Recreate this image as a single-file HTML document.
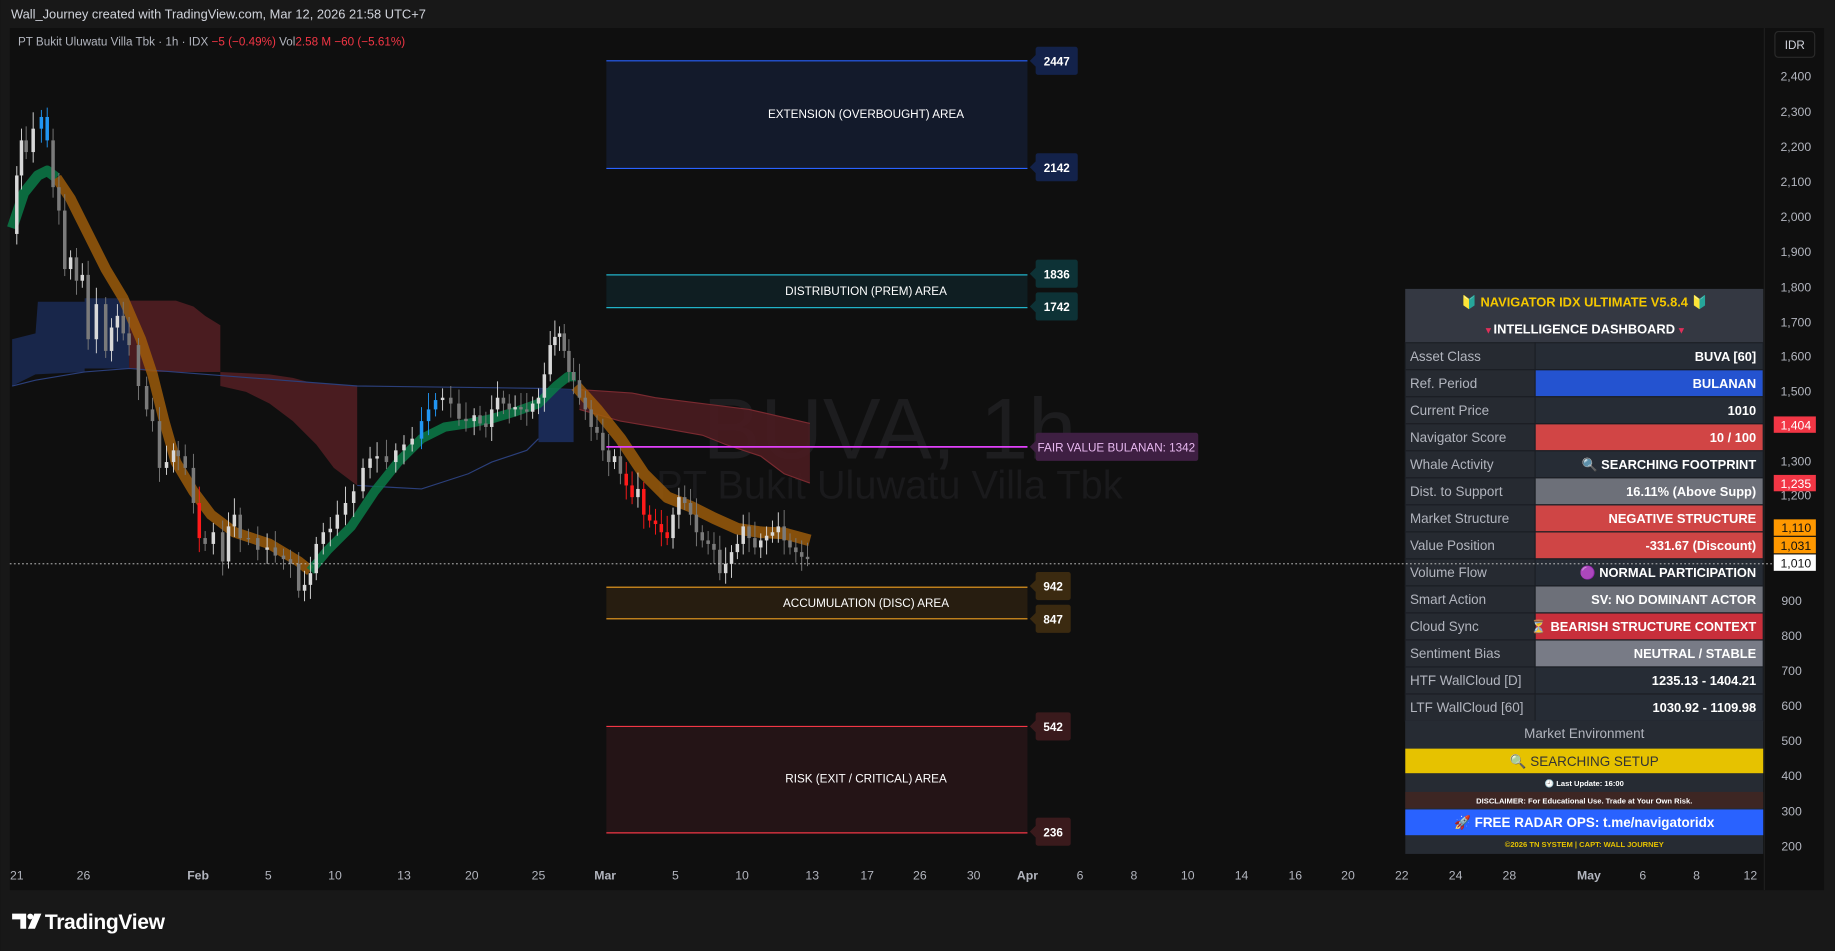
<!DOCTYPE html>
<html><head><meta charset="utf-8"><style>
html,body{margin:0;padding:0;background:#161616;width:1835px;height:951px;overflow:hidden}
svg{display:block}
text{font-family:"Liberation Sans",sans-serif}
</style></head><body>
<svg id="s" width="1835" height="951" viewBox="0 0 1568 813" xmlns="http://www.w3.org/2000/svg">
<rect width="1568" height="813" fill="#181818"/>
<text x="9" y="16" font-size="11" fill="#d1d4dc">Wall_Journey created with TradingView.com, Mar 12, 2026 21:58 UTC+7</text>
<rect x="8" y="24" width="1551" height="737" fill="#0f0f0f"/>
<line x1="1508" y1="24" x2="1508" y2="761" stroke="#1e1e1e"/>
<text x="760" y="392" font-size="74" fill="#1d1d1f" text-anchor="middle">BUVA, 1h</text>
<text x="760" y="426" font-size="34" fill="#1a1a1c" text-anchor="middle">PT Bukit Uluwatu Villa Tbk</text>
<rect x="518" y="52" width="360" height="92" fill="#131a2b"/>
<line x1="518" y1="52" x2="878" y2="52" stroke="#2962ff"/><line x1="518" y1="144" x2="878" y2="144" stroke="#2962ff"/>
<text x="740" y="101" font-size="10" fill="#fff" text-anchor="middle">EXTENSION (OVERBOUGHT) AREA</text>
<rect x="518" y="235" width="360" height="28" fill="#0f1e22"/>
<line x1="518" y1="235" x2="878" y2="235" stroke="#20b2c8"/><line x1="518" y1="263" x2="878" y2="263" stroke="#20b2c8"/>
<text x="740" y="252" font-size="10" fill="#fff" text-anchor="middle">DISTRIBUTION (PREM) AREA</text>
<rect x="518" y="502" width="360" height="27" fill="#271d10"/>
<line x1="518" y1="502" x2="878" y2="502" stroke="#f0a020"/><line x1="518" y1="529" x2="878" y2="529" stroke="#f0a020"/>
<text x="740" y="519" font-size="10" fill="#fff" text-anchor="middle">ACCUMULATION (DISC) AREA</text>
<rect x="518" y="621" width="360" height="91" fill="#241416"/>
<line x1="518" y1="621" x2="878" y2="621" stroke="#f23645"/><line x1="518" y1="712" x2="878" y2="712" stroke="#f23645"/>
<text x="740" y="669" font-size="10" fill="#fff" text-anchor="middle">RISK (EXIT / CRITICAL) AREA</text>
<g>
<polygon points="10,290 30,285 32,258 72,258 72,255 110,255 110,315 72,315 72,318 30,320 10,330" fill="#1a2a55" opacity="0.85"/>
<polygon points="110,257 150,257 165,262 175,270 188,278 188,318 130,318 110,315" fill="#4a1c20"/>
<polygon points="188,318 230,320 250,323 265,327 305,330 305,415 285,400 270,380 250,360 230,345 210,335 188,330" fill="#4a1c20"/>
<polyline points="10,330 30,325 72,318 110,315 305,330 460,332 490,333" fill="none" stroke="#2b3f7a"/>
<polyline points="305,415 360,418 400,405 420,395 450,385 460,375" fill="none" stroke="#2b3f7a"/>
<polygon points="460,332 490,333 490,378 460,378" fill="#1a2a55"/>
<polygon points="495,333 540,336 560,340 600,345 640,350 692,362 692,413 670,405 650,390 620,380 600,372 560,365 530,360 495,350" fill="#4a1c20" opacity="0.9"/>
<polyline points="495,333 540,336 560,340 600,345 640,350 692,362" fill="none" stroke="#7a2a30"/>
<polyline points="495,350 530,360 560,365 600,372 620,380 650,390 670,405 692,413" fill="none" stroke="#7a2a30"/>
</g>
<polyline points="10,195 20,165 32,150 40,146 48,152" fill="none" stroke="#0b7a48" stroke-width="9" stroke-linejoin="round" opacity="0.85"/>
<polyline points="48,152 60,170 75,200 90,230 105,255 120,290 130,320 140,360 150,395 165,420 180,440 200,455 230,465 255,480 265,488" fill="none" stroke="#a35f0a" stroke-width="9" stroke-linejoin="round" opacity="0.8"/>
<polyline points="265,488 280,470 300,450 320,420 340,395 360,375 380,365 400,362 420,358 440,352 460,345 475,330 485,322 492,322" fill="none" stroke="#0b7a48" stroke-width="8" stroke-linejoin="round" opacity="0.85"/>
<polyline points="492,330 510,350 530,375 550,405 570,425 590,433 610,443 630,452 650,455 670,456 692,462" fill="none" stroke="#a35f0a" stroke-width="10" stroke-linejoin="round" opacity="0.8"/>
<g id="candles"></g>
<line x1="518" y1="382" x2="878" y2="382" stroke="#e040fb" stroke-width="1.5"/>
<g font-size="10" font-weight="bold" fill="#fff" text-anchor="middle">
<path d="M880,52 l5,-5 v-5 a2,2 0 0 1 2,-2 h32 a2,2 0 0 1 2,2 v20 a2,2 0 0 1 -2,2 h-32 a2,2 0 0 1 -2,-2 v-5z" fill="#13224a"/><text x="903" y="56">2447</text>
<path d="M880,143 l5,-5 v-5 a2,2 0 0 1 2,-2 h32 a2,2 0 0 1 2,2 v20 a2,2 0 0 1 -2,2 h-32 a2,2 0 0 1 -2,-2 v-5z" fill="#13224a"/><text x="903" y="147">2142</text>
<path d="M880,234 l5,-5 v-5 a2,2 0 0 1 2,-2 h32 a2,2 0 0 1 2,2 v20 a2,2 0 0 1 -2,2 h-32 a2,2 0 0 1 -2,-2 v-5z" fill="#0d3236"/><text x="903" y="238">1836</text>
<path d="M880,262 l5,-5 v-5 a2,2 0 0 1 2,-2 h32 a2,2 0 0 1 2,2 v20 a2,2 0 0 1 -2,2 h-32 a2,2 0 0 1 -2,-2 v-5z" fill="#0d3236"/><text x="903" y="266">1742</text>
<path d="M880,382 l5,-5 v-5 a2,2 0 0 1 2,-2 h135 a2,2 0 0 1 2,2 v20 a2,2 0 0 1 -2,2 h-135 a2,2 0 0 1 -2,-2 v-5z" fill="#3e1f42"/><text x="954" y="386" fill="#e8b8f0" font-weight="normal">FAIR VALUE BULANAN: 1342</text>
<path d="M880,501 l5,-5 v-5 a2,2 0 0 1 2,-2 h26 a2,2 0 0 1 2,2 v20 a2,2 0 0 1 -2,2 h-26 a2,2 0 0 1 -2,-2 v-5z" fill="#3b2a10"/><text x="900" y="505">942</text>
<path d="M880,529 l5,-5 v-5 a2,2 0 0 1 2,-2 h26 a2,2 0 0 1 2,2 v20 a2,2 0 0 1 -2,2 h-26 a2,2 0 0 1 -2,-2 v-5z" fill="#3b2a10"/><text x="900" y="533">847</text>
<path d="M880,621 l5,-5 v-5 a2,2 0 0 1 2,-2 h26 a2,2 0 0 1 2,2 v20 a2,2 0 0 1 -2,2 h-26 a2,2 0 0 1 -2,-2 v-5z" fill="#3a1a1c"/><text x="900" y="625">542</text>
<path d="M880,711 l5,-5 v-5 a2,2 0 0 1 2,-2 h26 a2,2 0 0 1 2,2 v20 a2,2 0 0 1 -2,2 h-26 a2,2 0 0 1 -2,-2 v-5z" fill="#3a1a1c"/><text x="900" y="715">236</text>
</g>
<text x="15" y="39" font-size="10" fill="#b2b5be">PT Bukit Uluwatu Villa Tbk · 1h · IDX <tspan fill="#f23645">−5 (−0.49%)</tspan>  Vol<tspan fill="#f23645">2.58 M  −60 (−5.61%)</tspan></text>
<rect x="1517" y="27" width="34" height="22" rx="3" fill="#0f0f0f" stroke="#2a2a2a"/>
<text x="1534" y="42" font-size="10" fill="#d1d4dc" text-anchor="middle">IDR</text>
<g font-size="10.5" fill="#b2b5be" text-anchor="end">
<text x="1548" y="69">2,400</text><text x="1548" y="99">2,300</text><text x="1548" y="129">2,200</text><text x="1548" y="159">2,100</text><text x="1548" y="189">2,000</text><text x="1548" y="219">1,900</text><text x="1548" y="249">1,800</text><text x="1548" y="279">1,700</text><text x="1548" y="308">1,600</text><text x="1548" y="338">1,500</text><text x="1548" y="368">1,400</text><text x="1548" y="398">1,300</text><text x="1548" y="427">1,200</text><text x="1540" y="517">900</text><text x="1540" y="547">800</text><text x="1540" y="577">700</text><text x="1540" y="607">600</text><text x="1540" y="637">500</text><text x="1540" y="667">400</text><text x="1540" y="697">300</text><text x="1540" y="727">200</text>
</g>
<g font-size="10.5" text-anchor="end">
<rect x="1516" y="356" width="36" height="14" fill="#f23645"/><text x="1548" y="367" fill="#fff">1,404</text>
<rect x="1516" y="406" width="36" height="14" fill="#f23645"/><text x="1548" y="417" fill="#fff">1,235</text>
<rect x="1516" y="444" width="36" height="14" fill="#ff9800"/><text x="1548" y="455" fill="#111">1,110</text>
<rect x="1516" y="459" width="36" height="14" fill="#ff9800"/><text x="1548" y="470" fill="#111">1,031</text>
<rect x="1516" y="474" width="36" height="14" fill="#fff"/><text x="1548" y="485" fill="#111">1,010</text>
</g>
<g font-size="11.5">
<rect x="1201" y="247" width="306" height="483" fill="#262b33"/>
<rect x="1201" y="247" width="306" height="46" fill="#343842"/>
<text x="1354" y="262" fill="#f5c800" font-weight="bold" text-anchor="middle" font-size="11">🔰 NAVIGATOR IDX ULTIMATE V5.8.4 🔰</text>
<text x="1354" y="285" fill="#fff" font-weight="bold" text-anchor="middle" font-size="11">INTELLIGENCE DASHBOARD</text>
<text x="1272" y="285" fill="#e0305a" font-size="8" text-anchor="middle">▼</text>
<text x="1437" y="285" fill="#e0305a" font-size="8" text-anchor="middle">▼</text>
<g id="rows"></g>
<rect x="1201" y="616" width="306" height="24" fill="#262b33"/>
<text x="1354" y="631" fill="#b2b5be" text-anchor="middle">Market Environment</text>
<rect x="1201" y="640" width="306" height="21" fill="#e6c200"/>
<text x="1354" y="655" fill="#333" text-anchor="middle">🔍 SEARCHING SETUP</text>
<text x="1354" y="672" fill="#fff" font-size="6.5" font-weight="bold" text-anchor="middle">🕘 Last Update: 16:00</text>
<rect x="1201" y="677" width="306" height="14" fill="#3d2623"/>
<text x="1354" y="687" fill="#fff" font-size="6.5" font-weight="bold" text-anchor="middle">DISCLAIMER: For Educational Use. Trade at Your Own Risk.</text>
<rect x="1201" y="692" width="306" height="22" fill="#2962ff"/>
<text x="1354" y="707" fill="#fff" font-weight="bold" text-anchor="middle">🚀 FREE RADAR OPS: t.me/navigatoridx</text>
<text x="1354" y="724" fill="#e6c200" font-size="6.5" font-weight="bold" text-anchor="middle">©2026 TN SYSTEM | CAPT: WALL JOURNEY</text>
</g>
<line x1="8" y1="482" x2="1515" y2="482" stroke="#d0d0d0" stroke-dasharray="1.5,2" stroke-width="0.8"/>
<g font-size="10.5" fill="#b2b5be" text-anchor="middle">
<text x="14" y="752">21</text><text x="71" y="752">26</text><text x="169" y="752" font-weight="bold">Feb</text><text x="229" y="752">5</text><text x="286" y="752">10</text><text x="345" y="752">13</text><text x="403" y="752">20</text><text x="460" y="752">25</text><text x="517" y="752" font-weight="bold">Mar</text><text x="577" y="752">5</text><text x="634" y="752">10</text><text x="694" y="752">13</text><text x="741" y="752">17</text><text x="786" y="752">26</text><text x="832" y="752">30</text><text x="878" y="752" font-weight="bold">Apr</text><text x="923" y="752">6</text><text x="969" y="752">8</text><text x="1015" y="752">10</text><text x="1061" y="752">14</text><text x="1107" y="752">16</text><text x="1152" y="752">20</text><text x="1198" y="752">22</text><text x="1244" y="752">24</text><text x="1290" y="752">28</text><text x="1358" y="752" font-weight="bold">May</text><text x="1404" y="752">6</text><text x="1450" y="752">8</text><text x="1496" y="752">12</text>
</g>
<path d="M10,781 h12 v13 h-5 v-8 h-7z" fill="#fff"/>
<circle cx="25.5" cy="783.5" r="2.5" fill="#fff"/>
<path d="M29,781 h6 l-5.5,13 h-6z" fill="#fff"/>
<text x="38" y="794" font-size="18" font-weight="bold" fill="#fff" letter-spacing="-0.3">TradingView</text>
</svg>
<script>
var NS="http://www.w3.org/2000/svg";
var rows=[["Asset Class","BUVA [60]","#262c35"],["Ref. Period","BULANAN","#2453d0"],["Current Price","1010","#262c35"],["Navigator Score","10 / 100","#d14545"],["Whale Activity","🔍 SEARCHING FOOTPRINT","#262c35"],["Dist. to Support","16.11% (Above Supp)","#6d7079"],["Market Structure","NEGATIVE STRUCTURE","#cf4545"],["Value Position","-331.67 (Discount)","#cf4545"],["Volume Flow","🟣 NORMAL PARTICIPATION","#262c35"],["Smart Action","SV: NO DOMINANT ACTOR","#6d7079"],["Cloud Sync","⏳ BEARISH STRUCTURE CONTEXT","#c82f3b"],["Sentiment Bias","NEUTRAL / STABLE","#787b86"],["HTF WallCloud [D]","1235.13 - 1404.21","#262c35"],["LTF WallCloud [60]","1030.92 - 1109.98","#262c35"]];
var g=document.getElementById("rows");
function el(t,a,txt){var e=document.createElementNS(NS,t);for(var k in a)e.setAttribute(k,a[k]);if(txt)e.textContent=txt;return e;}
rows.forEach(function(r,i){var y=293+i*23.1;
g.appendChild(el("rect",{x:1201,y:y,width:111,height:23.1,fill:"#262a31",stroke:"#1b1e24","stroke-width":1}));
g.appendChild(el("rect",{x:1312,y:y,width:195,height:23.1,fill:r[2],stroke:"#1b1e24","stroke-width":1}));
g.appendChild(el("text",{x:1205,y:y+15.5,fill:"#b2b5be","font-size":"11.5"},r[0]));
g.appendChild(el("text",{x:1501,y:y+15.5,fill:"#fff","font-weight":"bold","text-anchor":"end","font-size":"11"},r[1]));
});
var pts=[[10,200],[14,150],[18,120],[22,130],[28,110],[35,100],[40,120],[45,160],[50,180],[55,230],[60,220],[65,240],[70,235],[75,290],[82,260],[90,300],[95,280],[100,270],[105,285],[110,295],[118,330],[125,350],[130,360],[136,400],[142,395],[148,385],[152,390],[158,400],[165,430],[170,460],[175,465],[182,455],[190,480],[195,450],[200,440],[205,460],[212,460],[220,470],[228,468],[235,475],[242,478],[248,482],[255,505],[260,500],[265,490],[270,465],[276,455],[282,452],[288,440],[295,430],[302,420],[310,400],[316,392],[322,390],[330,395],[338,385],[345,380],[352,375],[360,360],[366,350],[372,342],[378,340],[385,345],[392,358],[398,360],[405,355],[410,362],[415,365],[420,350],[425,340],[430,345],[435,350],[440,348],[445,350],[450,352],[455,345],[460,340],[465,320],[470,295],[474,288],[478,285],[482,300],[486,318],[490,325],[495,340],[500,350],[505,365],[510,370],[515,385],[520,395],[525,390],[530,405],[535,415],[540,425],[545,418],[550,440],[555,445],[560,448],[565,455],[570,460],[575,440],[580,425],[585,430],[590,440],[595,455],[600,462],[605,465],[610,470],[615,490],[620,482],[625,472],[630,465],[635,450],[640,460],[645,468],[650,462],[655,458],[660,455],[665,450],[670,462],[675,468],[680,472],[685,476],[690,478]];
var c=document.getElementById("candles");
for(var i=1;i<pts.length;i++){var a=pts[i-1],b=pts[i];var x=b[0];var hi=Math.min(a[1],b[1]),lo=Math.max(a[1],b[1]);
var col=b[1]<a[1]?"#d8d8d8":"#7a7a7a";
if((x>=33&&x<=42)||(x>=360&&x<=372&&b[1]<a[1]))col="#2196f3";
if((x>=535&&x<=570&&b[1]>a[1])||x==170)col="#ff1a1a";
c.appendChild(el("line",{x1:x,y1:hi-6-(i%5)*2,x2:x,y2:lo+6+(i%3)*3,stroke:col,"stroke-width":0.8}));
c.appendChild(el("rect",{x:x-1.5,y:hi,width:3,height:Math.max(1,lo-hi),fill:col}));}
</script>
</body></html>
